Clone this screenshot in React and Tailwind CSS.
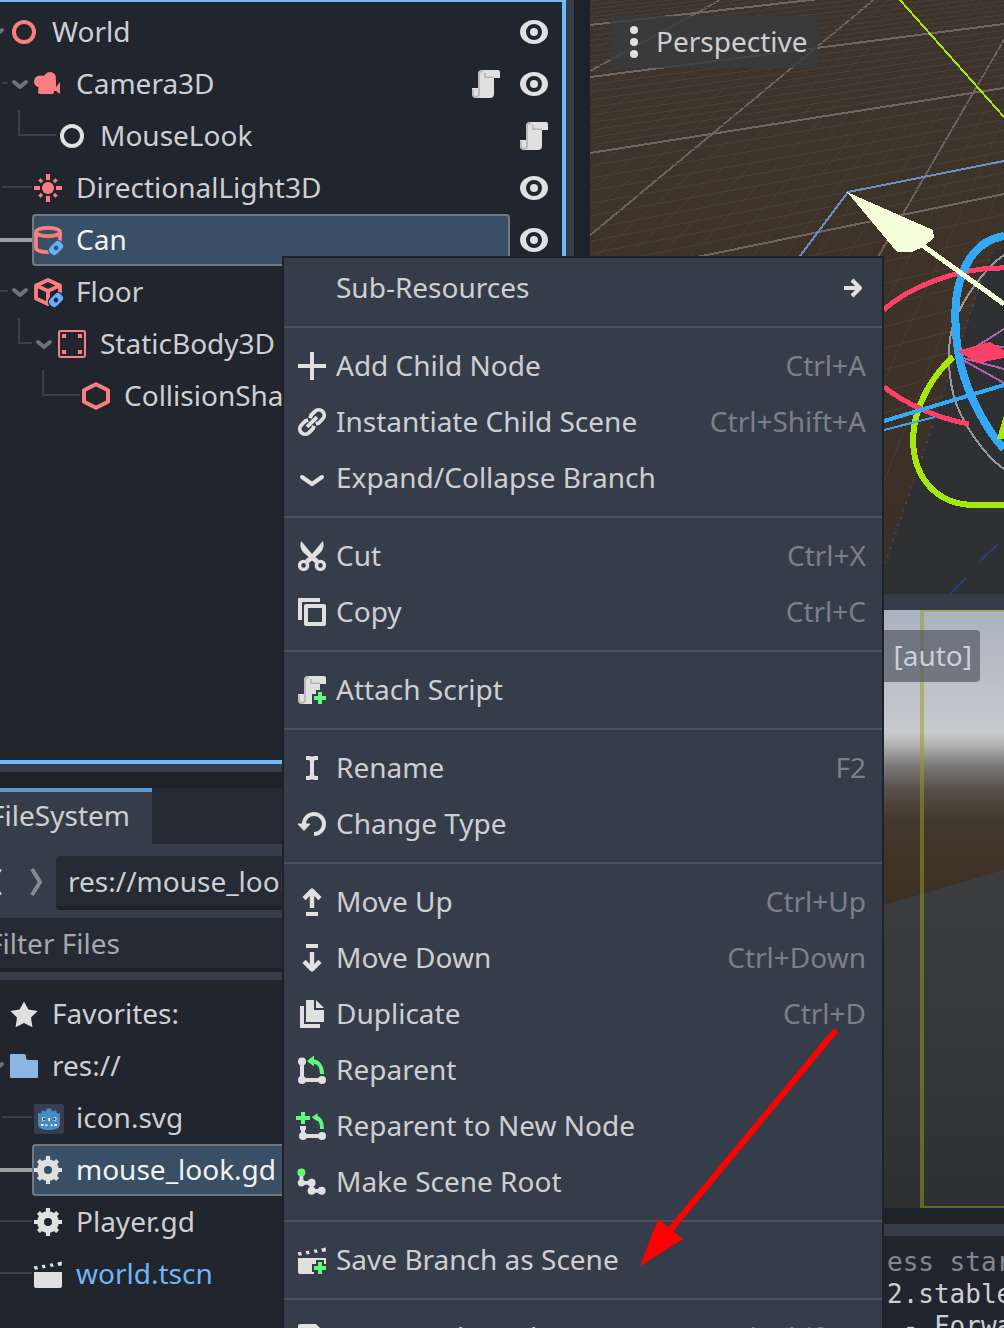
import React from "react";

const LIGHT = "#e0e0e0";
const RED = "#fc7f7f";
const GREEN = "#5ff97b";
const BLUE = "#5fb2ff";

function Icon({ children, className = "" }) {
  return (
    <svg viewBox="0 0 16 16" className={"h-8 w-8 shrink-0 " + className} fill={LIGHT} aria-hidden="true">
      {children}
    </svg>
  );
}

const Ring = ({ color }) => (
  <Icon><circle cx="8" cy="8" r="5" fill="none" stroke={color} strokeWidth="2" /></Icon>
);

const scriptShape = (
  <>
    <path d="M6 1a2 2 0 0 0-2 2v7H1v3a2 2 0 0 0 2 2h7a2 2 0 0 0 2-2V5h3V2a1 1 0 0 0-1-1z" />
    <path d="M6.500 1.500C5 1.500 4.500 2 4.500 3.500V13a1.500 1.500 0 0 1-1.500 1.500C2 14.500 1.500 14 1.500 13v-2.500M7.500 2.500v2.100H12" fill="none" stroke="#b4b4b4" strokeWidth="0.800" />
  </>
);
const plusShape = (
  <path d="M11 9h2v2h2v2h-2v2h-2v-2H9v-2h2z" fill={GREEN} />
);

const Script = () => <Icon>{scriptShape}</Icon>;
const Eye = () => (
  <Icon>
    <path fillRule="evenodd" d="M8 2C4.500 2 1 4.400 1 8s3.500 6 7 6 7-2.400 7-6-3.500-6-7-6zm0 2a4 4 0 1 1 0 8 4 4 0 0 1 0-8z" />
    <circle cx="8" cy="8" r="2" />
  </Icon>
);
const Camera = () => (
  <Icon>
    <g fill={RED}>
      <circle cx="9" cy="5" r="3" />
      <circle cx="4" cy="6.700" r="3" />
      <path d="M4 4l3-.3V6h5v3.500L14 7v6l-2-1.500h-1V12a1 1 0 0 1-1 1H4a1 1 0 0 1-1-1z" />
    </g>
  </Icon>
);
const Sun = () => (
  <Icon>
    <circle cx="8" cy="8" r="3" fill={RED} />
    <path d="M8 1v3M8 12v3M1 8h3M12 8h3" stroke={RED} strokeWidth="2" />
    <path d="M3.700 3.700l1.300 1.300M11 11l1.300 1.300M3.700 12.300L5 11M11 5l1.300-1.300" stroke={RED} strokeWidth="1.600" />
  </Icon>
);
const linkBadge = (bg) => (
  <g transform="rotate(-45 12 12)">
    <rect x="7.600" y="8.800" width="8.800" height="6.400" rx="3" fill={bg} />
    <rect x="8.300" y="9.600" width="7.400" height="4.800" rx="2" fill={BLUE} />
    <rect x="10.900" y="10.900" width="2.200" height="2.200" rx="1" fill={bg} />
  </g>
);
const Cylinder = () => (
  <Icon>
    <g fill="none" stroke={RED} strokeWidth="1.900">
      <ellipse cx="8" cy="4" rx="6" ry="2.100" />
      <path d="M2 4v8c0 1.200 2.700 2.100 6 2.100s6-.9 6-2.100V4" />
    </g>
    {linkBadge("#384f66")}
  </Icon>
);
const Cube = () => (
  <Icon>
    <path d="M8 2l6 2.700v6.600L8 14l-6-2.700V4.700zM2 4.700l6 2.800 6-2.800M8 7.500V14" fill="none" stroke={RED} strokeWidth="1.900" strokeLinejoin="round" />
    {linkBadge("#21252e")}
  </Icon>
);
const Body = () => (
  <Icon>
    <rect x="1.500" y="1.500" width="13" height="13" rx="0.700" fill="none" stroke={RED} />
    <path d="M3 3h2v2H3zM11 3h2v2h-2zM3 11h2v2H3zM11 11h2v2h-2z" fill={RED} />
  </Icon>
);
const Hexagon = () => (
  <Icon><path d="M8 2.100l6 3v5.800l-6 3-6-3V5.100z" fill="none" stroke={RED} strokeWidth="2" strokeLinejoin="round" /></Icon>
);
const Star = () => (
  <Icon><path d="M8 1.700l2.200 4 4.600.8-3.300 3.300.7 4.800L8 12.500l-4.200 2.100.7-4.800L1.200 6.500l4.600-.8z" /></Icon>
);
const Folder = () => (
  <Icon><path d="M1.500 2H8a1 1 0 0 1 1 1v1a1 1 0 0 0 1 1h4.500a.5.500 0 0 1 .5.500v8a.5.500 0 0 1-.5.500h-13a.5.500 0 0 1-.5-.5v-11a.5.500 0 0 1 .5-.5z" fill="#89b5de" /></Icon>
);
const GodotLogo = () => (
  <Icon>
    <rect x="1" y="1" width="15" height="15" rx="1" fill="#363d52" />
    <path d="M3 8V5.500l1.500.3L5 4l1.800.7.7-1.500h2l.7 1.500L12 4l.6 1.800 1.400-.3V11c0 2-2.300 3-5.500 3S3 13 3 11z" fill="#478cbf" />
    <path d="M5 7.700h1.500v1.600H5zM10.700 7.700h1.500v1.600h-1.500zM8.200 8h.8v1.500h-.8zM4.500 11h1.300v1H4.500zM6.700 11.200h1v.8h-1zM9.300 11.200h1v.8h-1zM11.200 11h1.300v1h-1.300z" fill="#fff" />
    <path d="M5.500 8h1v1h-1zM10.700 8h1v1h-1z" fill="#414042" />
  </Icon>
);
const Gear = () => (
  <Icon>
    <circle cx="8" cy="8" r="3.700" fill="none" stroke={LIGHT} strokeWidth="3.400" />
    <path d="M8 1v3M8 12v3M1 8h3M12 8h3M3.200 3.200l2 2M10.800 10.800l2 2M3.200 12.800l2-2M10.800 5.200l2-2" stroke={LIGHT} strokeWidth="2.100" />
  </Icon>
);
const clapper = (
  <>
    <path d="M1 7h14v7a1 1 0 0 1-1 1H2a1 1 0 0 1-1-1z" />
    <path d="M.8 4.200l1.700-.3.500 1.700-1.600.3zM4.800 3.600l1.500-.3.600 1.600-1.500.3zM8.800 2.900l1.500-.3.600 1.600-1.500.3zM12.600 2.200l2.300-.4v2l-1.700.2z" />
  </>
);
const Scene = () => <Icon>{clapper}</Icon>;

const menuIcons = {
  plus: <Icon><path d="M7 1h2v6h6v2H9v6H7V9H1V7h6z" /></Icon>,
  link: (
    <Icon>
      <g transform="rotate(-45 8 8)" fill="none" stroke={LIGHT} strokeWidth="1.900">
        <path d="M7.300 10L6 10.700H3.200a2.700 2.700 0 0 1 0-5.400H6l1.300.7M8.700 6L10 5.300h2.800a2.700 2.700 0 0 1 0 5.400H10l-1.300-.7M4.500 8h7" />
      </g>
    </Icon>
  ),
  chevron: <Icon><path d="M3 7.500l5 3.500 5-3.500" fill="none" stroke={LIGHT} strokeWidth="2" strokeLinecap="round" strokeLinejoin="round" /></Icon>,
  cut: (
    <Icon>
      <path d="M2.600.500C1.800 2.500 2.300 5 4 6.500l2.300 2L4.500 10l2 1.500L8 10.300l1.500 1.200 2-1.500-1.800-1.500 2.300-2c1.700-1.500 2.200-4 1.400-6L8 7z" />
      <circle cx="3.800" cy="12.700" r="2" fill="none" stroke={LIGHT} strokeWidth="1.700" />
      <circle cx="12.200" cy="12.700" r="2" fill="none" stroke={LIGHT} strokeWidth="1.700" />
    </Icon>
  ),
  copy: (
    <Icon>
      <path d="M1.500 1H12v2H3v9H1V1.500a.5.500 0 0 1 .5-.5z" />
      <rect x="5" y="5" width="9" height="9" fill="none" stroke={LIGHT} strokeWidth="2" strokeLinejoin="round" />
    </Icon>
  ),
  script: (
    <Icon>
      {scriptShape}
      <path d="M10 8h4v2h2v6H9v-1H8v-5h2z" fill="#363d4a" />
      {plusShape}
    </Icon>
  ),
  rename: <Icon><path d="M5 2h2l1 .4L9 2h2v2H9.500L9 4.500v7l.5.500H11v2H9l-1-.4-1 .4H5v-2h1.500l.5-.5v-7L6.500 4H5z" /></Icon>,
  reload: (
    <Icon>
      <path d="M4 8a5 5 0 1 1 5 5" fill="none" stroke={LIGHT} strokeWidth="2" />
      <path d="M1 8h6l-3 3.300z" stroke={LIGHT} strokeWidth="0.500" strokeLinejoin="round" />
    </Icon>
  ),
  up: (
    <Icon>
      <path d="M8 2v9M4 6.300L8 2.300l4 4" fill="none" stroke={LIGHT} strokeWidth="2.200" strokeLinejoin="round" />
      <path d="M5 13h6v2H5z" />
    </Icon>
  ),
  down: (
    <Icon>
      <path d="M8 5v9M4 9.700l4 4 4-4" fill="none" stroke={LIGHT} strokeWidth="2.200" strokeLinejoin="round" />
      <path d="M5 1h6v2H5z" />
    </Icon>
  ),
  duplicate: (
    <Icon>
      <path d="M2 4h2v9h8v2H2zM5 1h4v5h5v6H5z" />
      <path d="M10 1l4 4h-4z" />
    </Icon>
  ),
  reparent: (
    <Icon>
      <circle cx="3" cy="3.700" r="2" /><circle cx="3" cy="13" r="2" /><circle cx="13" cy="13" r="2" />
      <path d="M2 4h2v8h9v2H2z" />
      <path d="M7.500 3.500C11 3.500 13 6 13 10" fill="none" stroke={GREEN} strokeWidth="2" />
      <path d="M5.500 3.500L9 .7v5.600z" fill={GREEN} />
    </Icon>
  ),
  reparentNew: (
    <Icon>
      <circle cx="3.500" cy="13" r="2" /><circle cx="13" cy="13" r="2" />
      <path d="M2 8h3v2h-.5v2H13v2H2.500v-4H2z" />
      <path d="M2.500 1h2v2H7v2H4.500v2h-2V5H0V3h2.500z" fill={GREEN} />
      <path d="M9.500 3.800C12 3.800 13 6 13 9.500" fill="none" stroke={GREEN} strokeWidth="1.900" />
      <path d="M7.800 3.600l3-2v4.200z" fill={GREEN} />
    </Icon>
  ),
  root: (
    <Icon>
      <circle cx="2.700" cy="8.400" r="1.800" /><circle cx="7.800" cy="8.400" r="2" />
      <circle cx="7.800" cy="12.400" r="2" /><circle cx="12.800" cy="12.400" r="2" />
      <path d="M2.700 3v5.400h5.100v4h5" fill="none" stroke={LIGHT} strokeWidth="1.900" />
      <circle cx="2.700" cy="3.200" r="2" fill={GREEN} />
    </Icon>
  ),
  sceneNew: (
    <Icon>
      {clapper}
      <path d="M10 8h4v2h2v6H9v-2H8v-4h2z" fill="#363d4a" />
      {plusShape}
    </Icon>
  ),
  path: <Icon><path d="M2 1h8l2 2v12H1V2a1 1 0 0 1 1-1z" /></Icon>,
};

const menu = [
  [{ label: "Sub-Resources", sub: true }],
  [
    { label: "Add Child Node", icon: "plus", keys: "Ctrl+A" },
    { label: "Instantiate Child Scene", icon: "link", keys: "Ctrl+Shift+A" },
    { label: "Expand/Collapse Branch", icon: "chevron" },
  ],
  [
    { label: "Cut", icon: "cut", keys: "Ctrl+X" },
    { label: "Copy", icon: "copy", keys: "Ctrl+C" },
  ],
  [{ label: "Attach Script", icon: "script" }],
  [
    { label: "Rename", icon: "rename", keys: "F2" },
    { label: "Change Type", icon: "reload" },
  ],
  [
    { label: "Move Up", icon: "up", keys: "Ctrl+Up" },
    { label: "Move Down", icon: "down", keys: "Ctrl+Down" },
    { label: "Duplicate", icon: "duplicate", keys: "Ctrl+D" },
    { label: "Reparent", icon: "reparent" },
    { label: "Reparent to New Node", icon: "reparentNew" },
    { label: "Make Scene Root", icon: "root" },
  ],
  [{ label: "Save Branch as Scene", icon: "sceneNew" }],
  [{ label: "Copy Node Path", icon: "path", keys: "Ctrl+Shift+C" }],
];

function ContextMenu() {
  return (
    <div role="menu" className="absolute left-[282px] top-[256px] w-[602px] border-2 border-[#1d2229] bg-[#363d4a] pt-0.5">
      {menu.map((group, i) => (
        <div key={i}>
          {i > 0 && <div role="separator" className="my-2.5 h-0.5 bg-[#4b515d]" />}
          {group.map((item) => (
            <button key={item.label} role="menuitem" className="flex h-14 w-full items-center gap-2 pl-3 pr-4 text-left">
              {item.icon ? menuIcons[item.icon] : <span className="w-8" />}
              <span className="grow whitespace-nowrap pb-0.5">{item.label}</span>
              {item.keys && <span className="pb-0.5 text-[#7b7f88]">{item.keys}</span>}
              {item.sub && (
                <svg viewBox="0 0 24 24" className="h-6 w-6" fill="none" stroke={LIGHT} strokeWidth="4" aria-hidden="true">
                  <path d="M2 12h16M10 4l8 8-8 8" strokeLinejoin="round" />
                </svg>
              )}
            </button>
          ))}
        </div>
      ))}
    </div>
  );
}

/* Connector lines and the fold arrow to the left of a tree row. */
function Guide({ width, lines, arrow, strong }) {
  return (
    <svg width={width} height="52" className="h-[52px] shrink-0" fill="none" aria-hidden="true">
      {lines && <path d={lines} stroke={strong ? "#9b9da1" : "#3b3f47"} strokeWidth={strong ? 4 : 2} />}
      {arrow !== undefined && (
        <path d={`M${arrow - 6} 24l6 5 6-5`} stroke="#6e7178" strokeWidth="4" strokeLinecap="round" strokeLinejoin="round" />
      )}
    </svg>
  );
}

function Row({ guide, icon, label, selected, blue, right }) {
  return (
    <li role="treeitem" aria-selected={!!selected} className="flex h-[52px] items-center">
      <Guide {...guide} />
      <div
        className={
          "flex h-full grow items-center gap-3 whitespace-nowrap " +
          (selected
            ? "rounded-sm bg-[#384f66] text-[#f2f3f4] outline-2 -outline-offset-2 outline-[#73787f]"
            : blue ? "text-[#70b5f5]" : "")
        }
      >
        {icon}
        <span className="pb-0.5">{label}</span>
      </div>
      {right && <div className="flex gap-4 pl-2 pr-3">{right}</div>}
    </li>
  );
}

function SceneTree() {
  return (
    <div className="h-[772px] bg-[#363d4a] pb-2 pr-2">
      <ul role="tree" className="h-full border-b-4 border-r-4 border-t-2 border-[#70bafa] bg-[#21252e] pt-1">
        <Row guide={{ width: 8, arrow: -4 }} icon={<Ring color={RED} />} label="World" right={<Eye />} />
        <Row guide={{ width: 32, lines: "M2 25h6", arrow: 20 }} icon={<Camera />} label="Camera3D" right={<><Script /><Eye /></>} />
        <Row guide={{ width: 56, lines: "M19 0v25h37" }} icon={<Ring color={LIGHT} />} label="MouseLook" right={<Script />} />
        <Row guide={{ width: 32, lines: "M2 25h30" }} icon={<Sun />} label="DirectionalLight3D" right={<Eye />} />
        <Row guide={{ width: 32, lines: "M0 26h32", strong: true }} icon={<Cylinder />} label="Can" selected right={<Eye />} />
        <Row guide={{ width: 32, lines: "M0 25h8", arrow: 20 }} icon={<Cube />} label="Floor" right={<Eye />} />
        <Row guide={{ width: 56, lines: "M19 0v25h13", arrow: 44 }} icon={<Body />} label="StaticBody3D" right={<Eye />} />
        <Row guide={{ width: 80, lines: "M43 0v25h37" }} icon={<Hexagon />} label="CollisionShape3D" right={<Eye />} />
      </ul>
    </div>
  );
}

function FileSystem() {
  return (
    <div className="mt-4 flex min-h-0 grow flex-col bg-[#363d4a]">
      <div role="tablist" className="flex h-14 bg-[#252b34]">
        <button role="tab" aria-selected="true" className="flex w-[152px] items-center justify-end border-t-4 border-[#5f97cf] bg-[#363d4a] pb-1.5 pr-[22px]">
          FileSystem
        </button>
      </div>
      <div className="flex h-[66px] items-start pt-3">
        <button aria-label="Back" className="h-[52px] w-6">
          <svg width="24" height="52" fill="none" stroke={LIGHT} strokeWidth="4" aria-hidden="true"><path d="M0 13l-8 13 8 13" /></svg>
        </button>
        <button aria-label="Forward" className="h-[52px] w-8">
          <svg width="32" height="52" fill="none" stroke="#858991" strokeWidth="4" aria-hidden="true"><path d="M8 13l8 13-8 13" /></svg>
        </button>
        <input
          aria-label="Path"
          defaultValue="res://mouse_look.gd"
          className="h-[54px] min-w-0 grow rounded-sm border-b-4 border-[#1d2229] bg-[#252b34] px-3 outline-none"
        />
      </div>
      <div className="-ml-4 mt-2">
        <input
          aria-label="Filter Files"
          placeholder="Filter Files"
          className="h-[54px] w-full border-b-4 border-[#1d2229] bg-[#252b34] px-1 placeholder-[#a5a8ac] outline-none"
        />
      </div>
      <ul role="tree" className="mt-2 min-h-0 grow bg-[#21252e] pt-2">
        <Row guide={{ width: 8 }} icon={<Star />} label="Favorites:" />
        <Row guide={{ width: 8, arrow: -4 }} icon={<Folder />} label="res://" />
        <Row guide={{ width: 32, lines: "M2 25h30" }} icon={<GodotLogo />} label="icon.svg" />
        <Row guide={{ width: 32, lines: "M0 26h32", strong: true }} icon={<Gear />} label="mouse_look.gd" selected />
        <Row guide={{ width: 32, lines: "M0 25h32" }} icon={<Gear />} label="Player.gd" />
        <Row guide={{ width: 32, lines: "M0 25h32" }} icon={<Scene />} label="world.tscn" blue />
      </ul>
    </div>
  );
}

const leftY = [-15, 25, 77, 153, 279, 520];
const rightY = [-60, -22, 24, 88, 194, 400];
const shallow = [];
for (let i = 0; i < leftY.length - 1; i++) {
  for (let j = 0; j < 10; j++) {
    const t = j / 10;
    shallow.push([
      leftY[i] + (leftY[i + 1] - leftY[i]) * t,
      rightY[i] + (rightY[i + 1] - rightY[i]) * t,
      j === 0,
    ]);
  }
}
const steep = [];
for (let j = -20; j < 40; j++) {
  const k = j / 10;
  const x = 720 + 153.5 * k;
  steep.push([x, x + (-1.83 + 0.625 * k) * 594, j % 10 === 0]);
}
const byWeight = (lines) => [...lines].sort((a, b) => a[2] - b[2]);

function Viewport3D() {
  return (
    <div className="relative h-[594px] overflow-hidden bg-[#3f342a]">
      <svg viewBox="590 0 414 594" preserveAspectRatio="xMinYMin slice" shapeRendering="crispEdges" className="block h-full w-full" fill="none" aria-hidden="true">
        <defs>
          <linearGradient id="ground" x1="0" y1="0" x2="0" y2="1">
            <stop offset="0" stopColor="#3f342b" />
            <stop offset="1" stopColor="#3c3026" />
          </linearGradient>
        </defs>
        <rect x="590" width="414" height="594" fill="url(#ground)" />
        {byWeight(steep).map(([a, b, major], i) => (
          <path key={i} d={`M${a} 0L${b} 594`} stroke={major ? "#67625e" : "#443a32"} strokeWidth={major ? 2 : 1} />
        ))}
        {byWeight(shallow).map(([a, b, major], i) => (
          <path key={i} d={`M590 ${a}L1004 ${b}`} stroke={major ? "#6c6763" : "#463d35"} strokeWidth={major ? 2 : 1} />
        ))}
        <path d="M993 250h11v344H876z" fill="#2f3032" />
        <path d="M992 252L963 333 921 460 885 563" stroke="#34407a" strokeWidth="2" strokeDasharray="2 6" />
        <path d="M900 0L1004 117" stroke="#a5e80d" strokeWidth="2" />
        <path d="M800 256L848 192L1004 161" stroke="#6b8fc9" strokeWidth="2" />
        <path d="M950 594l16-16M980 561l18-17" stroke="#2b3a80" strokeWidth="2" />
        <path d="M1004 255C985 268 963 298 953 325C946 350 949 375 953 393C960 422 985 456 1004 469" stroke="#97989a" strokeWidth="2" />
        <path d="M953 357C935 373 913 405 913 440C914 482 940 505 975 505H1004" stroke="#a5e80d" strokeWidth="6" />
        <path d="M884 310C905 290 955 267 1004 268M884 387C903 402 935 418 969 424" stroke="#fc4067" strokeWidth="5" />
        <path d="M963 355L1004 329M963 358L1004 369M963 360L1004 383M985 345L1004 347" stroke="#b45fb8" strokeWidth="2" />
        <path d="M884 421L1004 385" stroke="#32a8f7" strokeWidth="4" />
        <path d="M884 430L935 417" stroke="#32a8f7" strokeWidth="2" />
        <path d="M1004 236C975 241 961 265 956 300C953 340 961 378 978 410C986 426 994 438 1004 449" stroke="#32a8f7" strokeWidth="8" />
        <path d="M957 351l33-9 14 8v8l-26 5z" fill="#fc4067" />
        <path d="M1004 415l-7 24h7z" fill="#a5e80d" />
        <path d="M847 192l86 38 1 8-11 9-11 5h-15z" fill="#f7fedc" />
        <path d="M922 245L1004 304" stroke="#f7fedc" strokeWidth="5" />
      </svg>
      <button className="absolute left-5 top-4 flex h-[52px] items-center gap-2 rounded-sm bg-[#393b3f]/80 pl-2 pr-2.5">
        <Icon>
          <circle cx="8" cy="2" r="2" /><circle cx="8" cy="8" r="2" /><circle cx="8" cy="14" r="2" />
        </Icon>
        <span className="-ml-0.5 pb-0.5">Perspective</span>
      </button>
    </div>
  );
}

function CameraPreview() {
  return (
    <div className="relative mt-4 h-[598px] overflow-hidden">
      <svg viewBox="590 610 414 598" preserveAspectRatio="xMinYMin slice" className="block h-full w-full" aria-hidden="true">
        <defs>
          <linearGradient id="sky" x1="0" y1="610" x2="0" y2="910" gradientUnits="userSpaceOnUse">
            <stop offset="0" stopColor="#a9b3c1" />
            <stop offset="0.410" stopColor="#c8c9cc" />
            <stop offset="0.450" stopColor="#b2b2b2" />
            <stop offset="0.520" stopColor="#7a7978" />
            <stop offset="0.600" stopColor="#574f48" />
            <stop offset="0.700" stopColor="#43382d" />
            <stop offset="1" stopColor="#3c2f23" />
          </linearGradient>
          <linearGradient id="floor" x1="0" y1="870" x2="0" y2="1208" gradientUnits="userSpaceOnUse">
            <stop offset="0" stopColor="#3c3d3e" />
            <stop offset="1" stopColor="#2f3031" />
          </linearGradient>
        </defs>
        <rect x="590" y="610" width="414" height="598" fill="url(#sky)" />
        <path d="M590 988L884 905L1004 870V1208H590z" fill="url(#floor)" />
        <path d="M920 610h84v2h-80v594h80v2h-84z" fill="#9d9d19" fillOpacity="0.510" />
      </svg>
      <div className="absolute right-6 top-5 flex h-[52px] items-center rounded-sm bg-[#4b515e]/65 pb-0.5 pl-8 pr-2">[auto]</div>
    </div>
  );
}

export default function App() {
  return (
    <div className="relative flex h-screen overflow-hidden bg-[#1d2229] font-['Noto_Sans',sans-serif] text-[28px] leading-[38px] text-[#cdcfd2]">
      <aside className="flex w-[574px] shrink-0 flex-col">
        <SceneTree />
        <FileSystem />
      </aside>
      <main className="ml-4 flex min-w-0 grow flex-col">
        <section className="bg-[#363d4a]">
          <Viewport3D />
          <CameraPreview />
        </section>
        <section className="mt-4 min-h-0 grow overflow-hidden bg-[#363d4a] pt-3">
          <div className="h-full whitespace-pre bg-[#21252e] pl-[297px] pt-2.5 font-['DejaVu_Sans_Mono',monospace] text-[26px] leading-8">
            <p className="text-[#85878c]">ess started</p>
            <p>2.stable.official</p>
            <p> - Forward+</p>
          </div>
        </section>
      </main>
      <ContextMenu />
      <svg viewBox="0 0 200 240" className="pointer-events-none absolute left-[640px] top-[1026px] h-60 w-[200px]" fill="#ff0000" aria-hidden="true">
        <path d="M196 4L30 204" stroke="#ff0000" strokeWidth="6" />
        <path d="M0 240l18-47 25 20z" />
      </svg>
    </div>
  );
}
